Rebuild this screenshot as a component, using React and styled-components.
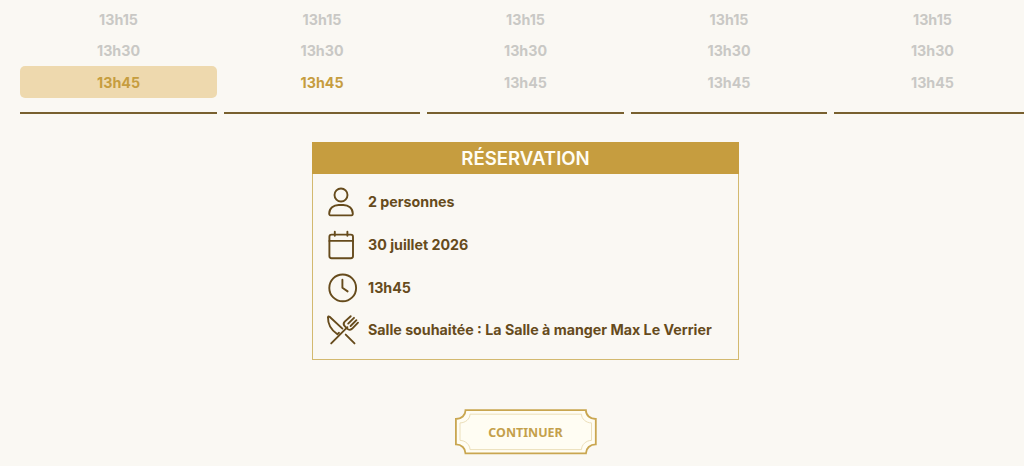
import React, { useState } from "react";

import styled, { createGlobalStyle } from "styled-components";

const GlobalStyle = createGlobalStyle`
  * {
    box-sizing: border-box;
  }

  body {
    margin: 0;
    height: 466px;
    overflow: hidden;
    background: #faf8f3;
    font-family: Inter, "Liberation Sans", sans-serif;
  }
`;

const Page = styled.main`
  width: 1024px;
  height: 466px;
  overflow: hidden;
  display: flex;
  flex-direction: column;
  align-items: center;
`;

const Days = styled.div`
  align-self: flex-start;
  display: grid;
  grid-template-columns: repeat(5, 196.3px);
  column-gap: 7.2px;
  padding: 3.4px 0 0 20.4px;
`;

const Day = styled.div`
  display: flex;
  flex-direction: column;
  padding-bottom: 14px;
  border-bottom: 2px solid #78602f;
`;

const Slot = styled.button`
  height: 31.5px;
  padding: 0;
  border: 0;
  border-radius: 5px;
  font: inherit;
  font-size: 14.24px;
  font-weight: 700;
  color: ${(props) => (props.disabled ? "#c9c8c5" : "#c69d3f")};
  background: ${(props) => (props.$selected ? "#eed9ae" : "transparent")};
`;

const Card = styled.section`
  width: 427px;
  height: 218px;
  margin-top: 28px;
  margin-left: 27px;
  border: 1px solid #d3b96f;
`;

const CardTitle = styled.h2`
  margin: -1px -1px 0;
  height: 32px;
  display: flex;
  align-items: center;
  justify-content: center;
  background: #c69d3f;
  color: #fffdf5;
  font-size: 18.6px;
  font-weight: 600;
`;

const Details = styled.ul`
  list-style: none;
  margin: 0;
  padding: 7px 0 0 13px;
`;

const Detail = styled.li`
  height: 42.7px;
  display: flex;
  align-items: center;
  gap: 8px;
  color: #664b1c;
  font-size: 14.24px;
  font-weight: 700;
  white-space: nowrap;
`;

const DetailText = styled.span`
  padding-bottom: 1px;
`;

const IconSvg = styled.svg`
  width: 34px;
  height: 34px;
  flex: none;
  fill: none;
  stroke: #664b1c;
  stroke-width: 1.9;
  stroke-linecap: round;
  stroke-linejoin: round;
`;

const Continue = styled.button`
  position: relative;
  width: 142px;
  height: 46px;
  margin-top: 49px;
  margin-left: 27px;
  padding: 1px 0 0;
  border: 0;
  background: none;
  color: #c4a04b;
  font-family: "Noto Sans", "Open Sans", sans-serif;
  font-size: 12.45px;
  font-weight: 700;
`;

const Frame = styled.svg`
  position: absolute;
  inset: 0;
  width: 142px;
  height: 46px;
`;

const Label = styled.span`
  position: relative;
`;

const PersonIcon = () => (
  <IconSvg viewBox="0 0 34 34">
    <circle cx="15" cy="10" r="6.5" />
    <path d="M3.2 28.6c0-5.4 4.4-8.6 9.4-8.6h4.8c5 0 9.4 3.2 9.4 8.6 0 .9-.5 1.8-1.3 1.8h-21c-.8 0-1.3-.9-1.3-1.8z" />
  </IconSvg>
);

const CalendarIcon = () => (
  <IconSvg viewBox="0 0 34 34">
    <rect x="3.4" y="6.6" width="23.6" height="23.6" rx="2.2" />
    <path d="M3.4 12.9h23.6M8.8 3.8v4M21.4 3.8v4" />
  </IconSvg>
);

const ClockIcon = () => (
  <IconSvg viewBox="0 0 34 34">
    <circle cx="16.7" cy="16.9" r="13.4" />
    <path d="M16.4 8.8v8l5.2 3.6" />
  </IconSvg>
);

const CutleryIcon = () => (
  <IconSvg viewBox="0 0 34 34">
    <path d="M16.4 15.6 3.6 3.8c-1-.8-1.6-.4-1.6.6-.2 6.6 3 12.6 9.4 16.8l1.6-1.4" />
    <path d="M19.7 21.6l8.8 8.8M5.2 30.4 21.4 14.2" />
    <path d="M24.7 3.2l-6 5.4c-1.5 1.6-1.3 3.3.2 4.8l2.3 2.3c1.5 1.5 3.2 1.5 4.8.1l6-6.1M28 4.8l-5.8 5.8M30.4 7.2l-5.8 5.8" />
  </IconSvg>
);

const days = [
  { id: 1, open: ["13h45"] },
  { id: 2, open: ["13h45"] },
  { id: 3, open: [] },
  { id: 4, open: [] },
  { id: 5, open: [] },
];

const slots = ["13h15", "13h30", "13h45"];

const App = () => {
  const [selected, setSelected] = useState({ day: 1, slot: "13h45" });

  return (
    <Page>
      <GlobalStyle />
      <Days>
        {days.map((day) => (
          <Day key={day.id}>
            {slots.map((slot) => (
              <Slot
                key={slot}
                type="button"
                disabled={!day.open.includes(slot)}
                $selected={selected.day === day.id && selected.slot === slot}
                onClick={() => setSelected({ day: day.id, slot })}
              >
                {slot}
              </Slot>
            ))}
          </Day>
        ))}
      </Days>

      <Card>
        <CardTitle>RÉSERVATION</CardTitle>
        <Details>
          <Detail>
            <PersonIcon />
            <DetailText>2 personnes</DetailText>
          </Detail>
          <Detail>
            <CalendarIcon />
            <DetailText>30 juillet 2026</DetailText>
          </Detail>
          <Detail>
            <ClockIcon />
            <DetailText>{selected.slot}</DetailText>
          </Detail>
          <Detail>
            <CutleryIcon />
            <DetailText>
              Salle souhaitée : La Salle à manger Max Le Verrier
            </DetailText>
          </Detail>
        </Details>
      </Card>

      <Continue type="button">
        <Frame viewBox="0 0 142 46" fill="#fffdf3">
          <path
            d="M10.5 1.2H130.9C130.9 6.2 135 10 140.8 10V35.4C135 35.4 130.9 39.4 130.9 44.4H10.5C10.5 39.4 6.5 35.4 .9 35.4V10C6.5 10 10.5 6.2 10.5 1.2Z"
            stroke="#c9a650"
            strokeWidth="1.8"
          />
          <path
            d="M15 5.2H126.5C126.5 9.9 131 13.9 136.5 13.9V31.4C131 31.4 126.5 35.9 126.5 40.6H15C15 35.9 10.5 31.4 5 31.4V13.9C10.5 13.9 15 9.9 15 5.2Z"
            stroke="#ecdfba"
            strokeWidth="1"
          />
        </Frame>
        <Label>CONTINUER</Label>
      </Continue>
    </Page>
  );
};

export default App;
